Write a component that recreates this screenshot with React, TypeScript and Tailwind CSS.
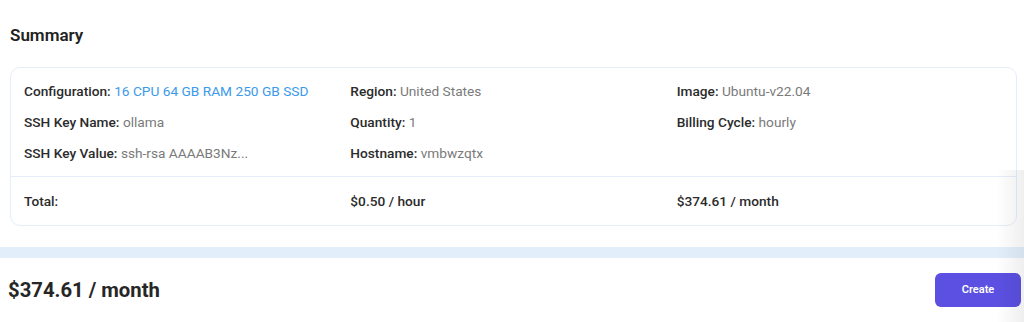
import React from "react";

const Item = ({ label, value, blue }: { label: string; value?: string; blue?: boolean }) => (
  <div className="h-[16px] leading-[16px] whitespace-nowrap">
    {label && <span className="text-[#2b2b2b] font-medium">{label} </span>}
    {value && <span className={blue ? "text-[#3b9aea]" : "text-[#7a7a7a]"}>{value}</span>}
  </div>
);

export default function App() {
  return (
    <div className="relative w-[1024px] h-[322px] bg-white overflow-hidden" style={{ fontFamily: "Roboto, 'Noto Sans', sans-serif" }}>
      <div className="px-[10px] pt-[25px]">
        <h2 className="text-[17px] leading-[20px] font-semibold text-[#222]">Summary</h2>
        <div className="mt-[22px] w-[1007px] border border-[#e4eef8] rounded-[10px] text-[13.7px]">
          <div className="grid grid-cols-3 gap-y-[15px] px-[13px] pt-[15px] pb-[15px]">
            <Item label="Configuration:" value="16 CPU 64 GB RAM 250 GB SSD" blue />
            <Item label="Region:" value="United States" />
            <Item label="Image:" value="Ubuntu-v22.04" />
            <Item label="SSH Key Name:" value="ollama" />
            <Item label="Quantity:" value="1" />
            <Item label="Billing Cycle:" value="hourly" />
            <Item label="SSH Key Value:" value="ssh-rsa AAAAB3Nz..." />
            <Item label="Hostname:" value="vmbwzqtx" />
            <div />
          </div>
          <div className="border-t border-[#e4eef8] grid grid-cols-3 px-[13px] pt-[16px] pb-[16px] text-[#2b2b2b] font-medium">
            <div className="h-[16px] leading-[16px]">Total:</div>
            <div className="h-[16px] leading-[16px]">$0.50 / hour</div>
            <div className="h-[16px] leading-[16px]">$374.61 / month</div>
          </div>
        </div>
      </div>
      <div className="mt-[21px] h-[11px] bg-[#e2effb]" />
      <div className="h-[64px] flex items-center justify-between pl-[8px] pr-[3px]">
        <div className="text-[20.3px] font-bold text-[#262626] leading-[24px]">$374.61 / month</div>
        <button className="w-[86px] h-[34px] rounded-[6px] bg-[#5b50e1] text-white text-[11px] font-semibold">Create</button>
      </div>
      <div className="pointer-events-none absolute right-0 top-[170px] w-[28px] h-[152px] bg-gradient-to-r from-transparent to-[#00000010]" />
    </div>
  );
}
